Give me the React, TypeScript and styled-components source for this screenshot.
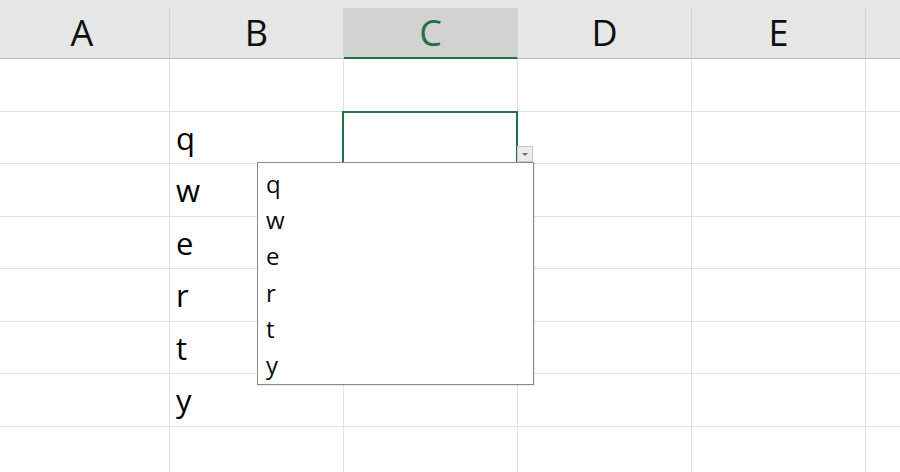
import React from "react";
import styled, { createGlobalStyle } from "styled-components";

const GlobalStyle = createGlobalStyle`
  html, body {
    margin: 0;
    padding: 0;
    background: #ffffff;
    overflow: hidden;
  }
  * { box-sizing: border-box; }
`;

const Sheet = styled.div`
  width: 900px;
  height: 472px;
  overflow: hidden;
  background: #ffffff;
  font-family: "Open Sans", "Noto Sans", sans-serif;
`;

const Grid = styled.div`
  display: grid;
  grid-template-columns: 175px repeat(5, 174px);
  grid-template-rows: 8px 51px;
  grid-auto-rows: 52.5px;
  margin-left: -5px;
  width: 1045px;
`;

const TopStrip = styled.div`
  grid-column: 1 / -1;
  height: 8px;
  background: #e6e6e6;
`;

const HeaderCell = styled.div<{ $selected?: boolean }>`
  height: 51px;
  background: ${(p) => (p.$selected ? "#d2d2d2" : "#e6e6e6")};
  border-right: 1px solid #d3d3d3;
  border-bottom: ${(p) => (p.$selected ? "2px solid #217346" : "1px solid #bdbdbd")};
  color: ${(p) => (p.$selected ? "#217346" : "#0f0f0f")};
  font-size: 36px;
  line-height: 50px;
  text-align: center;
`;

const Cell = styled.div<{ $active?: boolean }>`
  position: relative;
  height: 52.5px;
  border-right: 1px solid #e1e1e1;
  border-bottom: 1px solid #e1e1e1;
  padding-left: 6px;
  font-size: 31px;
  line-height: 52px;
  color: #000;
  z-index: ${(p) => (p.$active ? 2 : 0)};
`;

const Selection = styled.div`
  position: absolute;
  inset: -1px -1px -1px -2px;
  border: 2px solid #217346;
  border-bottom: none;
  pointer-events: none;
`;

const DropButton = styled.div`
  position: absolute;
  right: -16px;
  bottom: 1px;
  width: 16px;
  height: 16px;
  background: #ececec;
  border: 1px solid #c9c9c9;
  display: flex;
  align-items: center;
  justify-content: center;
  z-index: 3;

  &::after {
    content: "";
    width: 0;
    height: 0;
    border-left: 3px solid transparent;
    border-right: 3px solid transparent;
    border-top: 3px solid #6f6f6f;
  }
`;

const ListBox = styled.div`
  position: absolute;
  left: -87px;
  top: calc(100% - 1px);
  width: 277px;
  height: 223px;
  background: #ffffff;
  border: 1px solid #8a8a8a;
  box-shadow: 1px 1px 0 rgba(0, 0, 0, 0.08);
  padding: 3px 0 0 8px;
  overflow: hidden;
  z-index: 4;
  display: flex;
  flex-direction: column;
`;

const ListItem = styled.div`
  flex: 0 0 36.2px;
  font-size: 24px;
  line-height: 36.2px;
  color: #0a0a0a;
`;

const columns = ["A", "B", "C", "D", "E", "F"];
const values = ["", "q", "w", "e", "r", "t", "y", ""];
const options = ["q", "w", "e", "r", "t", "y"];

export default function App() {
  return (
    <>
      <GlobalStyle />
      <Sheet>
        <Grid>
          <TopStrip />
          {columns.map((c) => (
            <HeaderCell key={c} $selected={c === "C"}>
              {c === "F" ? "" : c}
            </HeaderCell>
          ))}
          {values.map((v, r) =>
            columns.map((c) => {
              const active = c === "C" && r === 1;
              return (
                <Cell key={`${c}${r}`} $active={active}>
                  {c === "B" ? v : ""}
                  {active && (
                    <>
                      <Selection />
                      <DropButton />
                      <ListBox>
                        {options.map((o) => (
                          <ListItem key={o}>{o}</ListItem>
                        ))}
                      </ListBox>
                    </>
                  )}
                </Cell>
              );
            })
          )}
        </Grid>
      </Sheet>
    </>
  );
}
